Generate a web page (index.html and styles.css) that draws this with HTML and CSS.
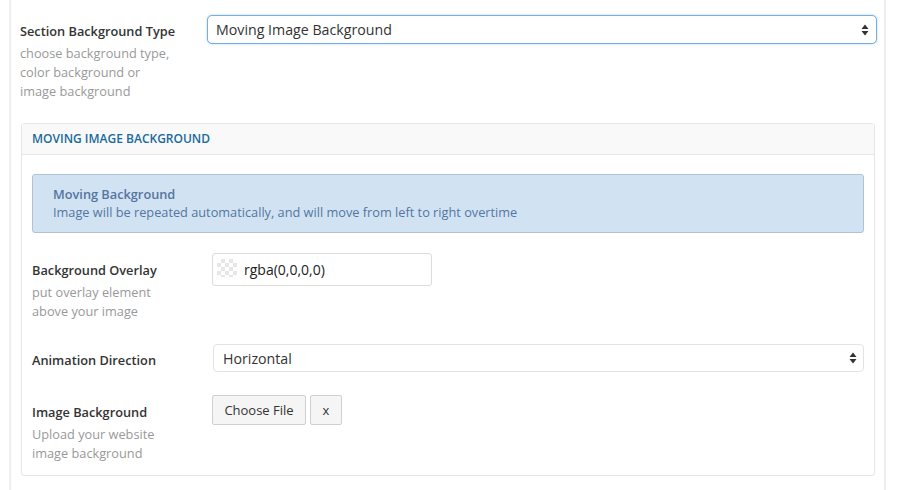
FILE: index.html
```html
<!DOCTYPE html>
<html>
<head>
<meta charset="utf-8">
<link rel="stylesheet" href="styles.css">
</head>
<body>
<div class="wrap">
  <div class="row top-row">
    <div class="label-col">
      <div class="label">Section Background Type</div>
      <div class="desc">choose background type,<br>color background or<br>image background</div>
    </div>
    <div class="select focus wide">
      <span>Moving Image Background</span>
      <svg class="arrows" width="8" height="12" viewBox="0 0 8 12"><path d="M4 0.5 L7.5 5 H0.5 Z M4 11.5 L7.5 7 H0.5 Z" fill="#333"/></svg>
    </div>
  </div>

  <div class="panel">
    <div class="panel-head">MOVING IMAGE BACKGROUND</div>
    <div class="panel-body">
      <div class="alert">
        <div class="alert-title">Moving Background</div>
        <div class="alert-text">Image will be repeated automatically, and will move from left to right overtime</div>
      </div>

      <div class="prow overlay-row">
        <div class="plabel">
          <div class="label">Background Overlay</div>
          <div class="desc">put overlay element<br>above your image</div>
        </div>
        <div class="color-input">
          <span class="swatch"></span>
          <span>rgba(0,0,0,0)</span>
        </div>
      </div>

      <div class="prow anim-row">
        <div class="plabel">
          <div class="label">Animation Direction</div>
        </div>
        <div class="select small">
          <span>Horizontal</span>
          <svg class="arrows" width="8" height="12" viewBox="0 0 8 12"><path d="M4 0.5 L7.5 5 H0.5 Z M4 11.5 L7.5 7 H0.5 Z" fill="#333"/></svg>
        </div>
      </div>

      <div class="prow image-row">
        <div class="plabel">
          <div class="label">Image Background</div>
          <div class="desc">Upload your website<br>image background</div>
        </div>
        <div class="buttons">
          <button class="btn choose">Choose File</button>
          <button class="btn clear">x</button>
        </div>
      </div>
    </div>
  </div>
</div>
</body>
</html>
```

FILE: styles.css
```css
html, body {
  margin: 0;
  padding: 0;
  background: #fff;
}
body {
  font-family: "Open Sans", "Liberation Sans", sans-serif;
  color: #333;
}
.wrap {
  margin-left: 9px;
  height: 490px;
  border-left: 2px solid #eeeeee;
  border-right: 2px solid #eeeeee;
  padding-left: 9px;
  box-sizing: border-box;
  width: 877px;
}
.row {
  display: flex;
  align-items: flex-start;
}
.top-row {
  padding-top: 15px;
}
.label-col {
  width: 187px;
  padding-top: 7px;
}
.label {
  font-size: 12.75px;
  font-weight: 600;
  color: #333;
  line-height: 18px;
}
.desc {
  font-size: 12.75px;
  color: #999;
  line-height: 19px;
  margin-top: 4px;
  white-space: nowrap;
}
.select {
  display: flex;
  align-items: center;
  justify-content: space-between;
  box-sizing: border-box;
  background: #fff;
  font-size: 14.2px;
  color: #333;
}
.select.wide {
  width: 670px;
  height: 29px;
  border: 1px solid #75aee3;
  border-radius: 5px;
  box-shadow: 0 0 2px rgba(82, 160, 230, 0.6);
  padding: 0 7px 0 8px;
}
.select.small {
  width: 652px;
  height: 28px;
  border: 1px solid #e3e3e3;
  border-radius: 4px;
  padding: 0 6px 0 9px;
}
.arrows {
  display: block;
}
.panel {
  margin: 22px 9px 0 1px;
  border: 1px solid #e6e6e6;
  border-radius: 3px;
  height: 353px;
  box-sizing: border-box;
}
.panel-head {
  height: 31px;
  box-sizing: border-box;
  background: #f9f9f9;
  border-bottom: 1px solid #e8e8e8;
  padding: 0 10px;
  font-size: 12px;
  font-weight: 600;
  color: #1a6a9c;
  line-height: 30px;
}
.panel-body {
  padding: 19px 10px 0 10px;
}
.alert {
  height: 59px;
  box-sizing: border-box;
  background: #d1e3f3;
  border: 1px solid #aec3d8;
  border-radius: 3px;
  padding: 10px 20px;
  font-size: 12.75px;
  line-height: 18px;
  color: #5476a0;
}
.alert-title {
  font-weight: 600;
  color: #5575a0;
}
.prow {
  display: flex;
  align-items: flex-start;
}
.plabel {
  width: 180px;
  flex: none;
}
.overlay-row {
  margin-top: 20px;
}
.overlay-row .plabel {
  padding-top: 8px;
}
.color-input {
  width: 220px;
  height: 33px;
  box-sizing: border-box;
  border: 1px solid #dcdcdc;
  border-radius: 3px;
  display: flex;
  align-items: center;
  padding-left: 4px;
  font-size: 14px;
  color: #222;
}
.swatch {
  width: 20px;
  height: 18px;
  margin-right: 7px;
  margin-top: -4px;
  background-color: #fff;
  background-image: conic-gradient(#e2e2e2 25%, #fff 0 50%, #e2e2e2 0 75%, #fff 0);
  background-size: 8px 8px;
  opacity: 0.8;
}
.anim-row {
  margin-top: 23px;
  align-items: center;
}
.anim-row .plabel {
  padding-top: 4px;
}
.anim-row .select {
  margin-left: 1px;
}
.image-row {
  margin-top: 23px;
}
.image-row .plabel {
  padding-top: 8px;
}
.buttons {
  display: flex;
  gap: 4px;
}
.btn {
  font-family: "Open Sans", "Liberation Sans", sans-serif;
  font-size: 13px;
  color: #333;
  background: #f5f5f5;
  border: 1px solid #d0d0d0;
  border-radius: 2px;
  height: 30px;
  box-sizing: border-box;
  padding: 0;
  margin: 0;
}
.btn.choose {
  width: 94px;
}
.btn.clear {
  width: 32px;
}
```
